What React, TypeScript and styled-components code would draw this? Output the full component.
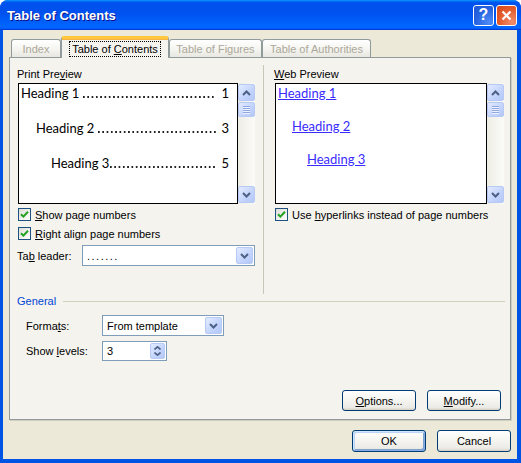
import styled, { createGlobalStyle, css } from 'styled-components'

const GlobalStyle = createGlobalStyle`
  html, body { margin: 0; padding: 0; background: #fff; }
  body { font-family: "Liberation Sans", Arial, sans-serif; font-size: 11px; color: #000; }
  * { box-sizing: border-box; }
`

// Window frame
const Window = styled.div`
  width: 521px;
  height: 463px;
  display: flex;
  flex-direction: column;
  background: #0054E3;
  border-radius: 8px 8px 0 0;
  overflow: hidden;
`
const TitleBar = styled.div`
  height: 30px;
  flex: none;
  display: flex;
  align-items: center;
  padding: 0 4px 0 7px;
  background: linear-gradient(#0997FF, #0053EE 8%, #0050EE 40%, #0066FF 88%, #0066FF 93%, #005BFF 95%, #003DD7 96%, #003DD7);
`
const Caption = styled.div`
  flex: 1;
  color: #fff;
  font-weight: bold;
  font-size: 13px;
  text-shadow: 1px 1px #0F1089;
`
const CaptionBtn = styled.div<{ $kind: 'help' | 'close' }>`
  width: 21px;
  height: 21px;
  margin-left: 2px;
  border: 1px solid #fff;
  border-radius: 3px;
  display: flex;
  align-items: center;
  justify-content: center;
  color: #fff;
  font-weight: bold;
  font-size: 16px;
  background: ${p => p.$kind === 'help'
    ? 'radial-gradient(circle at 80% 85%, #4F8BF8, #2663E0 60%, #1E55D6)'
    : 'radial-gradient(circle at 80% 85%, #F08D6C, #E35A2B 60%, #D2461C)'};
`

const Client = styled.div`
  flex: 1;
  margin: 0 4px 4px 3px;
  background: #ECE9D8;
  padding: 6px 6px 7px 6px;
  display: flex;
  flex-direction: column;
`

// Tabs
const TabStrip = styled.div`
  height: 22px;
  margin-bottom: -1px;
  padding-left: 2px;
  display: flex;
  align-items: flex-end;
  position: relative;
  z-index: 1;
`
const Tab = styled.div<{ $active?: boolean; $w: number }>`
  width: ${p => p.$w}px;
  height: 18px;
  margin-bottom: 1px;
  border: 1px solid #919B9C;
  border-bottom: none;
  border-radius: 3px 3px 0 0;
  display: flex;
  align-items: center;
  justify-content: center;
  color: #ACA899;
  background: linear-gradient(#FFFFFF, #F3F3EF 60%, #E8E7E1);
  ${p => p.$active && css`
    height: 22px;
    margin-bottom: 0;
    color: #000;
    background: #F4F3EE;
    border-top: 3px solid #FFC83C;
    box-shadow: inset 0 1px #F9B345;
    padding-top: 1px;
  `}
`
const FocusRect = styled.span`
  border: 1px dotted #000;
  padding: 1px 2px;
`

const Panel = styled.div`
  flex: 1;
  border: 1px solid #919B9C;
  background: #F4F3EE;
  box-shadow: 1px 1px 0 #D0CEBF;
  padding: 9px 5px 8px 7px;
  display: flex;
  flex-direction: column;
`
const TopRow = styled.div`
  height: 227px;
  display: flex;
`
const Column = styled.div<{ $w: number }>`
  width: ${p => p.$w}px;
  display: flex;
  flex-direction: column;
`
const Divider = styled.div`
  width: 1px;
  margin: -2px 10px 0 8px;
  background: #C9C7BA;
`
const Label = styled.div`
  height: 14px;
  line-height: 14px;
  white-space: nowrap;
`
const U = styled.span`
  text-decoration: underline;
`

// Preview boxes
const PreviewRow = styled.div`
  height: 121px;
  margin: 2px 0 0 1px;
  display: flex;
`
const PreviewBox = styled.div`
  flex: 1;
  border: 1px solid #000;
  background: #fff;
  display: flex;
  flex-direction: column;
  padding: 0 8px 0 2px;
  font-family: Lato, "Open Sans", sans-serif;
  font-size: 13px;
`
const TocLine = styled.div<{ $indent: number; $gap: number }>`
  height: 18px;
  margin-bottom: ${p => p.$gap}px;
  padding-left: ${p => p.$indent}px;
  display: flex;
  align-items: center;
  white-space: nowrap;
`
const Leader = styled.span<{ $space?: boolean }>`
  flex: 1;
  align-self: stretch;
  margin: 0 5px 0 ${p => (p.$space ? 4 : 1)}px;
  background: linear-gradient(to right, #222 2px, transparent 2px) left bottom 4px / 4.3px 2px repeat-x;
`
const WebLink = styled.a`
  color: #3A2BFF;
  text-decoration: underline;
`

const ScrollBar = styled.div`
  width: 17px;
  padding: 1px 0 1px;
  display: flex;
  flex-direction: column;
  background: linear-gradient(to right, #EEEDE5, #FBFBF8);
`
const ScrollBtnStyles = css`
  width: 17px;
  border: 1px solid #B7C9F5;
  border-radius: 2px;
  background: linear-gradient(135deg, #E3EBFF, #C2D3FC 60%, #B4C8F6);
  display: flex;
  align-items: center;
  justify-content: center;
`
const ScrollBtn = styled.div`
  ${ScrollBtnStyles}
  height: 17px;
`
const Thumb = styled.div`
  ${ScrollBtnStyles}
  height: 15px;
  margin-top: 1px;
  flex-direction: column;
  gap: 1px;
  & > i {
    display: block;
    width: 7px;
    height: 1px;
    background: #8FA6E4;
    box-shadow: 0 1px #EEF3FF;
  }
`
const Spacer = styled.div`
  flex: 1;
`

// Checkboxes
const CheckRow = styled.div<{ $top: number }>`
  height: 13px;
  margin: ${p => p.$top}px 0 0 1px;
  display: flex;
  align-items: center;
  gap: 4px;
  white-space: nowrap;
`
const CheckBox = styled.div`
  width: 13px;
  height: 13px;
  border: 1px solid #1C5180;
  background: linear-gradient(135deg, #DCDCD7, #FFFFFF);
  display: flex;
  align-items: center;
  justify-content: center;
`

// Combo / spin
const FieldRow = styled.div<{ $top: number; $indent?: number }>`
  display: flex;
  align-items: center;
  margin-top: ${p => p.$top}px;
  padding-left: ${p => p.$indent ?? 0}px;
`
const FieldLabel = styled.div<{ $w: number }>`
  width: ${p => p.$w}px;
  white-space: nowrap;
`
const Combo = styled.div<{ $w?: number; $h?: number }>`
  ${p => (p.$w ? `width: ${p.$w}px;` : 'flex: 1;')}
  height: ${p => p.$h ?? 21}px;
  border: 1px solid #7F9DB9;
  background: #fff;
  display: flex;
  align-items: center;
  padding: 1px 1px 1px 4px;
`
const ComboText = styled.div<{ $spaced?: boolean }>`
  flex: 1;
  letter-spacing: ${p => (p.$spaced ? '1.5px' : '0')};
`
const DropBtn = styled.div`
  ${ScrollBtnStyles}
  height: 17px;
`
const SpinBtn = styled.div`
  ${ScrollBtnStyles}
  width: 15px;
  height: 16px;
  flex-direction: column;
  gap: 2px;
`

const Group = styled.div`
  height: 14px;
  display: flex;
  align-items: center;
  gap: 7px;
  color: #0046D5;
  &::after {
    content: '';
    flex: 1;
    height: 1px;
    background: #D0D0BF;
  }
`

// Buttons
const ButtonRow = styled.div<{ $top?: string; $pad?: number }>`
  margin-top: ${p => p.$top ?? 'auto'};
  padding-right: ${p => p.$pad ?? 0}px;
  display: flex;
  justify-content: flex-end;
  gap: 11px;
`
const Button = styled.button<{ $h?: number; $default?: boolean }>`
  width: 74px;
  height: ${p => p.$h ?? 21}px;
  padding: 0;
  font: inherit;
  color: #000;
  border: 1px solid #003C74;
  border-radius: 3px;
  background: linear-gradient(#FFFFFF, #F4F4F0 50%, #ECEBE6 86%, #D6D0C5);
  box-shadow: ${p => (p.$default ? 'inset 1px 1px #CEE7FF, inset -1px -1px #89ADE4, inset 2px 2px #BCD4F6, inset -2px -2px #7DA2CE' : 'none')};
`

const ChevronUp = () => (
  <svg width="9" height="6" viewBox="0 0 9 6"><path d="M1 5L4.5 1.5L8 5" stroke="#4D6185" strokeWidth="2" fill="none" /></svg>
)
const ChevronDown = () => (
  <svg width="9" height="6" viewBox="0 0 9 6"><path d="M1 1L4.5 4.5L8 1" stroke="#4D6185" strokeWidth="2" fill="none" /></svg>
)
const SmallUp = () => (
  <svg width="7" height="4" viewBox="0 0 7 4"><path d="M0.5 3.5L3.5 0.8L6.5 3.5" stroke="#4D6185" strokeWidth="1.6" fill="none" /></svg>
)
const SmallDown = () => (
  <svg width="7" height="4" viewBox="0 0 7 4"><path d="M0.5 0.5L3.5 3.2L6.5 0.5" stroke="#4D6185" strokeWidth="1.6" fill="none" /></svg>
)
const Check = () => (
  <svg width="9" height="9" viewBox="0 0 9 9"><path d="M1 4.2L3.4 6.6L8 1.8" stroke="#21A121" strokeWidth="2" fill="none" /></svg>
)

const VScroll = () => (
  <ScrollBar>
    <ScrollBtn><ChevronUp /></ScrollBtn>
    <Thumb><i /><i /><i /><i /></Thumb>
    <Spacer />
    <ScrollBtn><ChevronDown /></ScrollBtn>
  </ScrollBar>
)

const Checked = ({ children, top }: { children: React.ReactNode; top: number }) => (
  <CheckRow $top={top}>
    <CheckBox><Check /></CheckBox>
    <span>{children}</span>
  </CheckRow>
)

const printRows = [
  { text: 'Heading 1', page: '1', indent: 0, space: true },
  { text: 'Heading 2', page: '3', indent: 15, space: true },
  { text: 'Heading 3', page: '5', indent: 30, space: false },
]
const webRows = [
  { text: 'Heading 1', indent: 0 },
  { text: 'Heading 2', indent: 14 },
  { text: 'Heading 3', indent: 29 },
]

export default function App() {
  return (
    <>
      <GlobalStyle />
      <Window>
        <TitleBar>
          <Caption>Table of Contents</Caption>
          <CaptionBtn $kind="help">?</CaptionBtn>
          <CaptionBtn $kind="close">
            <svg width="11" height="11" viewBox="0 0 11 11"><path d="M1.5 1.5L9.5 9.5M9.5 1.5L1.5 9.5" stroke="#fff" strokeWidth="2.2" /></svg>
          </CaptionBtn>
        </TitleBar>
        <Client>
          <TabStrip>
            <Tab $w={50}>Index</Tab>
            <Tab $w={108} $active><FocusRect>Table of <U>C</U>ontents</FocusRect></Tab>
            <Tab $w={93}>Table of Figures</Tab>
            <Tab $w={109}>Table of Authorities</Tab>
          </TabStrip>
          <Panel>
            <TopRow>
              <Column $w={238}>
                <Label>Print Pre<U>v</U>iew</Label>
                <PreviewRow>
                  <PreviewBox>
                    {printRows.map(r => (
                      <TocLine key={r.text} $indent={r.indent} $gap={17}>
                        <span>{r.text}</span>
                        <Leader $space={r.space} />
                        <span>{r.page}</span>
                      </TocLine>
                    ))}
                  </PreviewBox>
                  <VScroll />
                </PreviewRow>
                <Checked top={4}><U>S</U>how page numbers</Checked>
                <Checked top={6}><U>R</U>ight align page numbers</Checked>
                <FieldRow $top={5}>
                  <FieldLabel $w={65}>Ta<U>b</U> leader:</FieldLabel>
                  <Combo>
                    <ComboText $spaced>.......</ComboText>
                    <DropBtn><ChevronDown /></DropBtn>
                  </Combo>
                </FieldRow>
              </Column>
              <Divider />
              <Column $w={230}>
                <Label><U>W</U>eb Preview</Label>
                <PreviewRow>
                  <PreviewBox>
                    {webRows.map(r => (
                      <TocLine key={r.text} $indent={r.indent} $gap={15}>
                        <WebLink>{r.text}</WebLink>
                      </TocLine>
                    ))}
                  </PreviewBox>
                  <VScroll />
                </PreviewRow>
                <Checked top={4}>Use <U>h</U>yperlinks instead of page numbers</Checked>
              </Column>
            </TopRow>
            <Group>General</Group>
            <FieldRow $top={7} $indent={9}>
              <FieldLabel $w={76}>Forma<U>t</U>s:</FieldLabel>
              <Combo $w={122}>
                <ComboText>From template</ComboText>
                <DropBtn><ChevronDown /></DropBtn>
              </Combo>
            </FieldRow>
            <FieldRow $top={5} $indent={9}>
              <FieldLabel $w={76}>Show <U>l</U>evels:</FieldLabel>
              <Combo $w={65} $h={20}>
                <ComboText>3</ComboText>
                <SpinBtn><SmallUp /><SmallDown /></SpinBtn>
              </Combo>
            </FieldRow>
            <ButtonRow $pad={4}>
              <Button><U>O</U>ptions...</Button>
              <Button><U>M</U>odify...</Button>
            </ButtonRow>
          </Panel>
          <ButtonRow $top="10px">
            <Button $h={22} $default>OK</Button>
            <Button $h={22}>Cancel</Button>
          </ButtonRow>
        </Client>
      </Window>
    </>
  )
}
